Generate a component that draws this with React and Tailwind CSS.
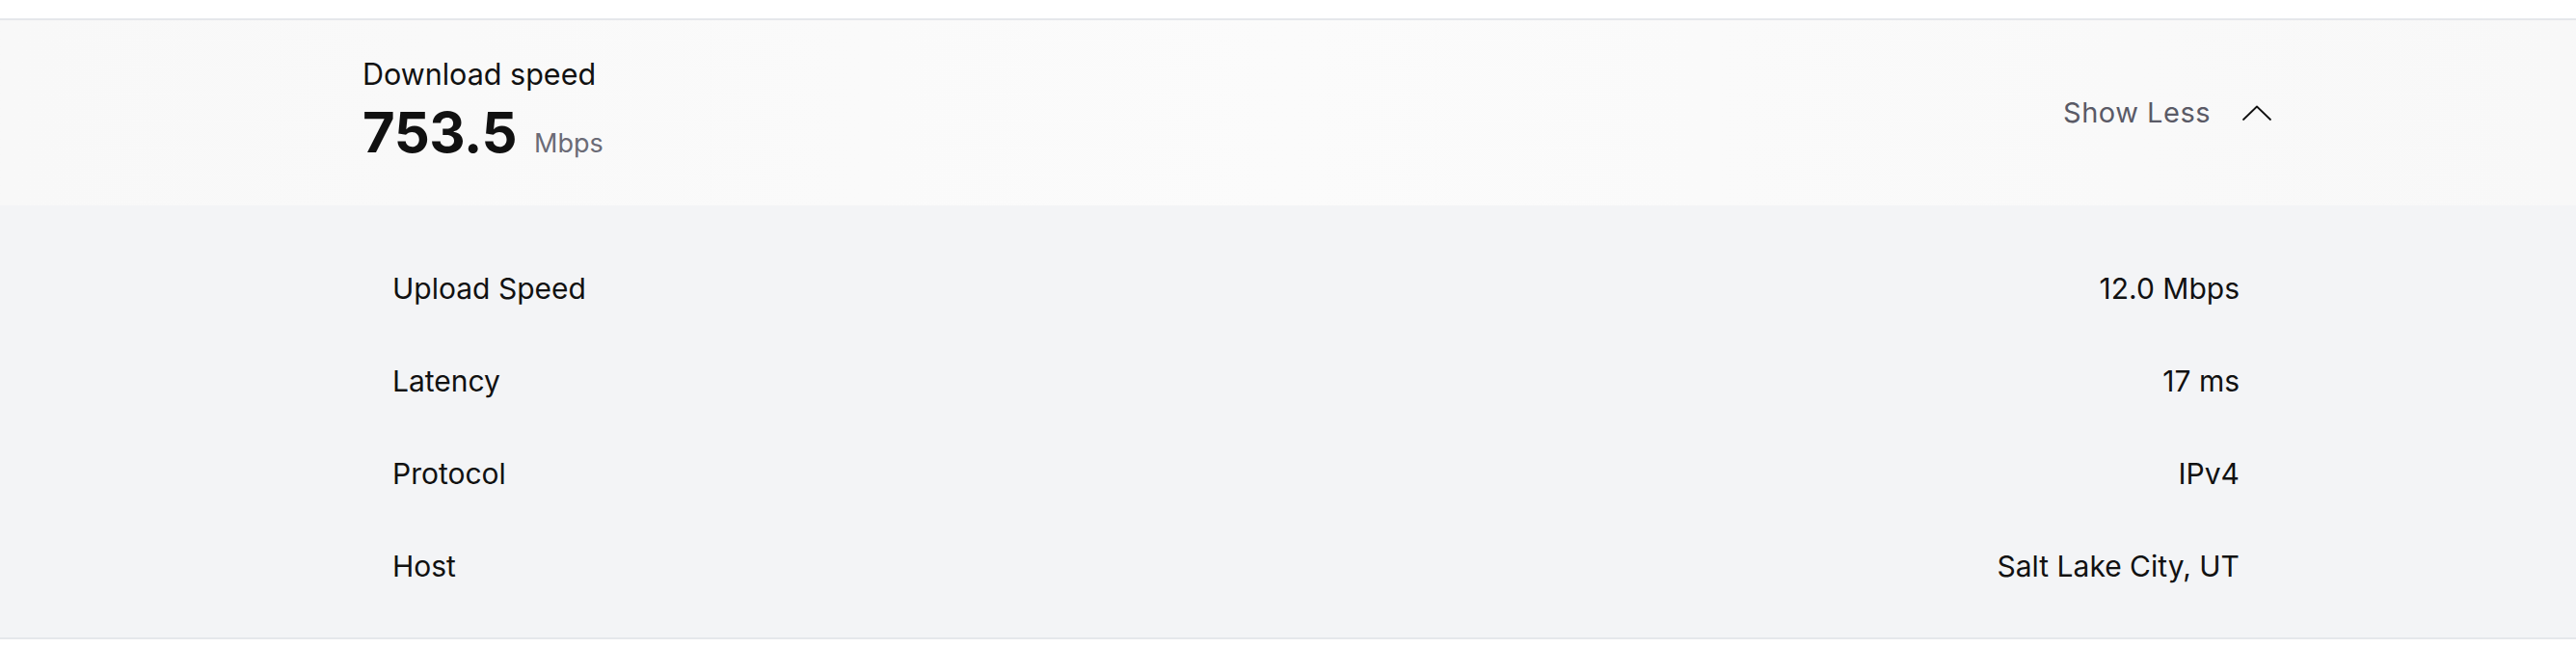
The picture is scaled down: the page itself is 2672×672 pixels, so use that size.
import React from "react";

const ROWS = [
  { label: "Upload Speed", value: "12.0 Mbps" },
  { label: "Latency", value: "17 ms" },
  { label: "Protocol", value: "IPv4" },
  { label: "Host", value: "Salt Lake City, UT" },
];

function ChevronUp() {
  return (
    <svg width="30" height="16" viewBox="0 0 30 16" fill="none">
      <polyline
        points="1,15 15,1.5 29,15"
        stroke="#111"
        strokeWidth="1.8"
        strokeLinecap="round"
        strokeLinejoin="round"
      />
    </svg>
  );
}

export default function App() {
  return (
    <div
      className="w-[2672px] h-[672px] bg-white pt-[19px] text-[#111]"
      style={{ fontFamily: "Inter, 'Liberation Sans', sans-serif" }}
    >
      {/* summary header */}
      <div className="border-t-2 border-b-2 border-[#e5e7eb]">
        <div className="h-[192px] bg-gradient-to-r from-[#f8f8f8] via-[#fbfbfb] to-[#f8f8f8]">
          <div className="ml-[376px] w-[1980px] h-full flex justify-between">
            <div className="pt-[38px] flex flex-col gap-[13px]">
              <div className="text-[30.5px] leading-[36px]">Download speed</div>
              <div className="flex items-baseline gap-[18px]">
                <span className="text-[58px] leading-[58px] font-bold tracking-[-0.5px]">
                  753.5
                </span>
                <span className="text-[27px] leading-[30px] text-[#6b6b76]">
                  Mbps
                </span>
              </div>
            </div>
            <button className="self-center flex items-center gap-[33px] text-[29px] leading-[34px] text-[#5a5a66] tracking-[0.5px]">
              <span>Show Less</span>
              <ChevronUp />
            </button>
          </div>
        </div>

        {/* details */}
        <div className="bg-[#f3f4f6] h-[448px] pt-[38px]">
          <div className="ml-[376px] w-[1980px] px-[31px] pr-[33px]">
            {ROWS.map((r) => (
              <div
                key={r.label}
                className="h-[96px] flex items-center justify-between text-[30px] leading-[40px]"
              >
                <span>{r.label}</span>
                <span>{r.value}</span>
              </div>
            ))}
          </div>
        </div>
      </div>
    </div>
  );
}
